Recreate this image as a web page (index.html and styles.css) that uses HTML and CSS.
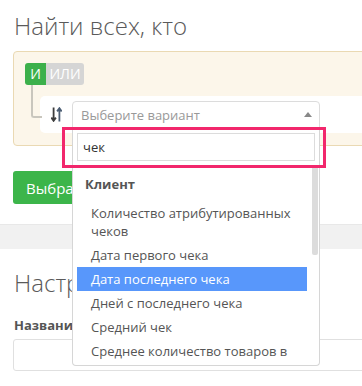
FILE: index.html
```html
<!DOCTYPE html>
<html>
<head>
  <meta charset="UTF-8">
  <meta name="viewport" content="width=device-width, initial-scale=1.0">
  <title>Сегмент</title>
  <link rel="stylesheet" href="styles.css">
</head>
<body>
  <main class="page">
    <h1 class="title">Найти всех, кто</h1>

    <section class="rules">
      <div class="logic">
        <span class="logic-btn active">И</span>
        <span class="logic-btn">ИЛИ</span>
      </div>

      <div class="rule">
        <svg class="sort-icon" width="11" height="15" viewBox="0 0 11 15">
          <path d="M2.6 0.5 V13.5 M0.3 10.6 L2.6 13.8 L4.9 10.6" fill="none" stroke="#3d3d3d" stroke-width="1.8"/>
          <path d="M8.4 14.5 V1.5 M6.1 4.4 L8.4 1.2 L10.7 4.4" fill="none" stroke="#4b5d73" stroke-width="1.8"/>
        </svg>

        <div class="select open">
          <div class="select-value">
            <span class="placeholder">Выберите вариант</span>
            <span class="caret"></span>
          </div>

          <div class="dropdown">
            <div class="mark"></div>
            <div class="search">
              <input type="text" value="чек">
            </div>
            <ul class="results">
              <li class="group">
                <div class="group-label">Клиент</div>
                <ul class="options">
                  <li>Количество атрибутированных чеков</li>
                  <li>Дата первого чека</li>
                  <li class="highlighted">Дата последнего чека</li>
                  <li>Дней с последнего чека</li>
                  <li>Средний чек</li>
                  <li>Среднее количество товаров в чеке</li>
                </ul>
              </li>
            </ul>
            <div class="scroll-thumb"></div>
          </div>
        </div>
      </div>
    </section>

    <button class="btn-green">Выбрать условие</button>
  </main>

  <div class="band"></div>

  <section class="page settings">
    <h2 class="title">Настройки</h2>
    <label class="field-label">Название</label>
    <input class="field" type="text">
  </section>
</body>
</html>
```

FILE: styles.css
```css
* {
  box-sizing: border-box;
}

body {
  margin: 0;
  overflow: hidden;
  background-color: #fff;
  font-family: 'Open Sans', 'DejaVu Sans', sans-serif;
  color: #555;
}

.page {
  padding: 0 0 0 13px;
}

.title {
  margin: 0 0 0 1px;
  padding-top: 13px;
  font-size: 24px;
  font-weight: 300;
  line-height: 26px;
  color: #5a5a5a;
}

.rules {
  position: relative;
  z-index: 5;
  margin: 12px -40px 0 0;
  padding: 10px 11px 12px;
  background-color: #fcf6ea;
  border: 1px solid #ead9b3;
  border-radius: 4px;
}

.logic {
  display: inline-flex;
  height: 22px;
  border-radius: 3px;
  overflow: hidden;
  font-size: 14px;
  line-height: 22px;
}

.logic-btn {
  width: 38px;
  text-align: center;
  background-color: #d5d5d5;
  color: #fff;
}

.logic-btn.active {
  width: 21px;
  background-color: #3cb04b;
}

.rule {
  position: relative;
  display: flex;
  align-items: flex-start;
  gap: 10px;
  margin: 11px 0 0 15px;
  padding: 5px 11px;
  height: 37px;
  background-color: #fff;
  border-radius: 5px;
}

.rule::before {
  content: '';
  position: absolute;
  left: -9px;
  top: -11px;
  width: 9px;
  height: 31px;
  border-left: 2px solid #c9c6bd;
  border-bottom: 2px solid #c9c6bd;
  border-bottom-left-radius: 3px;
}

.sort-icon {
  flex: none;
  margin-top: 6px;
}

.select {
  position: relative;
  flex: none;
  width: 248px;
}

.select-value {
  display: flex;
  align-items: center;
  justify-content: space-between;
  height: 27px;
  padding: 0 7px 0 8px;
  border: 1px solid #dcdcdc;
  border-radius: 4px;
  font-size: 13px;
}

.select.open .select-value {
  border-bottom-left-radius: 0;
  border-bottom-right-radius: 0;
}

.placeholder {
  color: #999;
}

.caret {
  width: 0;
  height: 0;
  border-left: 4px solid transparent;
  border-right: 4px solid transparent;
  border-bottom: 5px solid #888;
}

.dropdown {
  position: absolute;
  top: 100%;
  left: 0;
  width: 248px;
  height: 238px;
  background-color: #fff;
  border: 1px solid #d6d6d6;
  border-top: none;
  border-radius: 0 0 4px 4px;
  z-index: 10;
}

.mark {
  position: absolute;
  left: -11px;
  top: -1px;
  width: 264px;
  height: 41px;
  border: 3px solid #f2276c;
}

.search {
  padding: 5px 4px 0 4px;
}

.search input {
  width: 238px;
  height: 28px;
  margin: 0;
  padding: 0 5px;
  border: 1px solid #dcdcdc;
  font-family: 'Open Sans', sans-serif;
  font-size: 13px;
  color: #333;
  outline: none;
}

.results {
  list-style: none;
  width: 235px;
  margin: 7px 0 0 4px;
  padding: 0;
  height: 194px;
  overflow: hidden;
  font-size: 13px;
  line-height: 18px;
}

.scroll-thumb {
  position: absolute;
  left: 239px;
  top: 40px;
  width: 6px;
  height: 87px;
  background-color: #dcdcdc;
  border-radius: 0 0 2px 2px;
}

.group-label {
  padding: 7px 8px 8px;
  font-weight: 700;
}

.options {
  list-style: none;
  margin: 0 5px 0 0;
  padding: 0;
}

.options li {
  padding: 3px 8px 3px 14px;
}

.options li.highlighted {
  background-color: #5897fb;
  color: #fff;
}

.btn-green {
  display: block;
  margin-top: 25px;
  height: 33px;
  padding: 0 13px;
  border: none;
  border-radius: 3px;
  background-color: #3cb54a;
  color: #fff;
  font-family: 'Open Sans', sans-serif;
  font-size: 15px;
}

.band {
  height: 25px;
  margin-top: 20px;
  background-color: #f1f1f1;
  border-top: 1px solid #e8e8e8;
}

.settings .title {
  padding-top: 21px;
}

.field-label {
  display: block;
  margin: 20px 0 5px 1px;
  font-size: 13px;
  font-weight: 700;
  line-height: 18px;
  color: #555;
}

.field {
  display: block;
  width: 400px;
  height: 32px;
  border: 1px solid #e0e0e0;
  border-radius: 3px;
}
```
